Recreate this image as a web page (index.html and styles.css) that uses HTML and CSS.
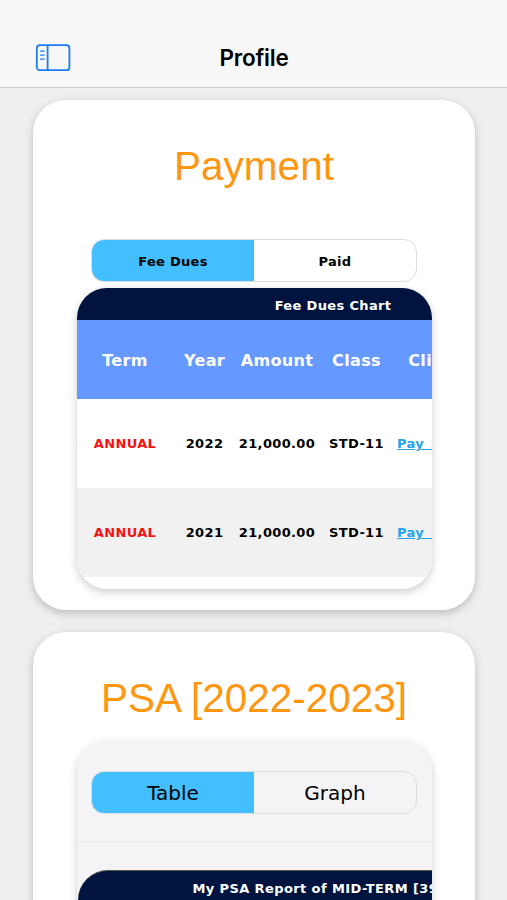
FILE: index.html
```html
<!DOCTYPE html>
<html lang="en">
<head>
    <meta charset="UTF-8">
    <meta name="viewport" content="width=device-width, initial-scale=1.0">
    <title>Profile</title>
    <link rel="stylesheet" href="styles.css">
</head>
<body>
    <header class="navbar">
        <button class="menu-btn" aria-label="Menu">
            <svg width="36" height="28" viewBox="0 0 36 28" fill="none" stroke="#1a7cf5" stroke-width="1.8">
                <rect x="1.8" y="1.2" width="32.6" height="25" rx="3"/>
                <path d="M12.6 1.2v25"/>
                <path d="M5.6 7.2h3.6M5.6 11.2h3.6M5.6 15.2h3.6" stroke-width="1.3" stroke-linecap="round"/>
            </svg>
        </button>
        <h1>Profile</h1>
    </header>

    <main>
        <section class="card">
            <h2>Payment</h2>
            <div class="segment payment-segment">
                <button class="active">Fee Dues</button>
                <button>Paid</button>
            </div>
            <div class="panel fee-panel">
                <table class="fee-table">
                    <colgroup>
                        <col class="col-term">
                        <col class="col-year">
                        <col class="col-amount">
                        <col class="col-class">
                        <col class="col-click">
                        <col>
                    </colgroup>
                    <thead>
                        <tr class="table-title"><th colspan="6">Fee Dues Chart</th></tr>
                        <tr class="table-head">
                            <th>Term</th>
                            <th>Year</th>
                            <th>Amount</th>
                            <th>Class</th>
                            <th>Click</th>
                            <th></th>
                        </tr>
                    </thead>
                    <tbody>
                        <tr>
                            <td class="term">ANNUAL</td>
                            <td>2022</td>
                            <td>21,000.00</td>
                            <td>STD-11</td>
                            <td><a href="#">Pay Now</a></td>
                            <td></td>
                        </tr>
                        <tr>
                            <td class="term">ANNUAL</td>
                            <td>2021</td>
                            <td>21,000.00</td>
                            <td>STD-11</td>
                            <td><a href="#">Pay Now</a></td>
                            <td></td>
                        </tr>
                    </tbody>
                </table>
            </div>
        </section>

        <section class="card">
            <h2>PSA [2022-2023]</h2>
            <div class="panel psa-panel">
                <div class="psa-tabs">
                    <div class="segment">
                        <button class="active">Table</button>
                        <button>Graph</button>
                    </div>
                </div>
                <div class="psa-report">
                    <div class="psa-title">My PSA Report of MID-TERM [39]</div>
                </div>
            </div>
        </section>
    </main>
</body>
</html>
```
FILE: styles.css
```css
* {
    box-sizing: border-box;
}
body {
    margin: 0;
    height: 100vh;
    background-color: #efefef;
    font-family: Verdana, "DejaVu Sans", sans-serif;
    color: #000;
}
button {
    background: none;
    border: none;
    padding: 0;
    font-family: inherit;
    color: inherit;
}
.navbar {
    display: grid;
    grid-template-columns: 1fr auto 1fr;
    align-items: end;
    height: 88px;
    padding: 0 35px 15px;
    background-color: #f7f7f7;
    border-bottom: 1px solid #cbcbcb;
}
.menu-btn {
    width: 36px;
    height: 28px;
}
.menu-btn svg {
    display: block;
}
.navbar h1 {
    margin: 0;
    padding-left: 1px;
    font-family: Inter, sans-serif;
    font-size: 22.5px;
    font-weight: 600;
    line-height: 28px;
    letter-spacing: -0.2px;
}
main {
    height: calc(100vh - 88px);
    padding: 12px 32px 0 33px;
    overflow: hidden;
}
.card {
    height: 510px;
    margin-bottom: 22px;
    overflow: hidden;
    background-color: #fff;
    border-radius: 33px;
    box-shadow: 0 3px 8px rgba(0, 0, 0, 0.22);
}
.card h2 {
    margin: 0;
    padding-top: 42px;
    font-family: Arial, "Liberation Sans", sans-serif;
    font-size: 40.5px;
    font-weight: normal;
    line-height: 48px;
    text-align: center;
    color: #ff9610;
}
.segment {
    display: flex;
    width: 326px;
    height: 43px;
    margin: 0 auto;
    overflow: hidden;
    border: 1px solid #dcdcdc;
    border-radius: 13px;
}
.segment button {
    width: 50%;
    font-size: 20px;
}
.segment .active {
    background-color: #43bfff;
}
.payment-segment {
    margin-top: 49px;
}
.payment-segment button {
    padding-top: 1px;
    font-size: 13px;
    font-weight: bold;
    letter-spacing: 0.3px;
}
.panel {
    width: 355px;
    margin: 0 auto;
    overflow: hidden;
    border-radius: 30px;
    box-shadow: 0 3px 8px rgba(0, 0, 0, 0.2);
}
.fee-panel {
    height: 301px;
    margin-top: 6px;
}
.fee-table {
    width: 513px;
    table-layout: fixed;
    border-collapse: collapse;
    font-size: 13px;
    font-weight: bold;
    letter-spacing: 0.35px;
    text-align: center;
    white-space: nowrap;
}
.fee-table th, .fee-table td {
    padding: 0;
}
.col-term { width: 97px; }
.col-year { width: 62px; }
.col-amount { width: 83px; }
.col-class { width: 76px; }
.col-click { width: 72px; }
.table-title {
    height: 32px;
    background-color: #00143f;
    color: #fff;
}
.fee-table .table-title th {
    padding-top: 2px;
}
.table-head {
    height: 79px;
    background-color: #6699ff;
    color: #fff;
    font-size: 16px;
}
.fee-table .table-head th {
    padding-top: 2px;
}
.fee-table tbody tr {
    height: 89px;
}
.fee-table tbody tr:nth-child(even) {
    background-color: #f1f1f1;
}
.fee-table .term {
    color: #f91111;
}
.fee-table a {
    color: #23a4ea;
    word-spacing: 2px;
}
.psa-panel {
    height: 300px;
    margin-top: 19px;
    background-color: #f4f4f7;
}
.psa-tabs {
    height: 101px;
    padding-top: 30px;
    border-bottom: 1px solid #e9e9ec;
}
.psa-report {
    width: 482px;
    margin: 28px 0 0 1px;
    overflow: hidden;
    border-top: 1px solid #55554a;
    border-radius: 30px 30px 0 0;
    background-color: #00143f;
}
.psa-title {
    height: 160px;
    font-size: 13px;
    font-weight: bold;
    letter-spacing: 0.4px;
    line-height: 35px;
    text-align: center;
    color: #fff;
}
```
